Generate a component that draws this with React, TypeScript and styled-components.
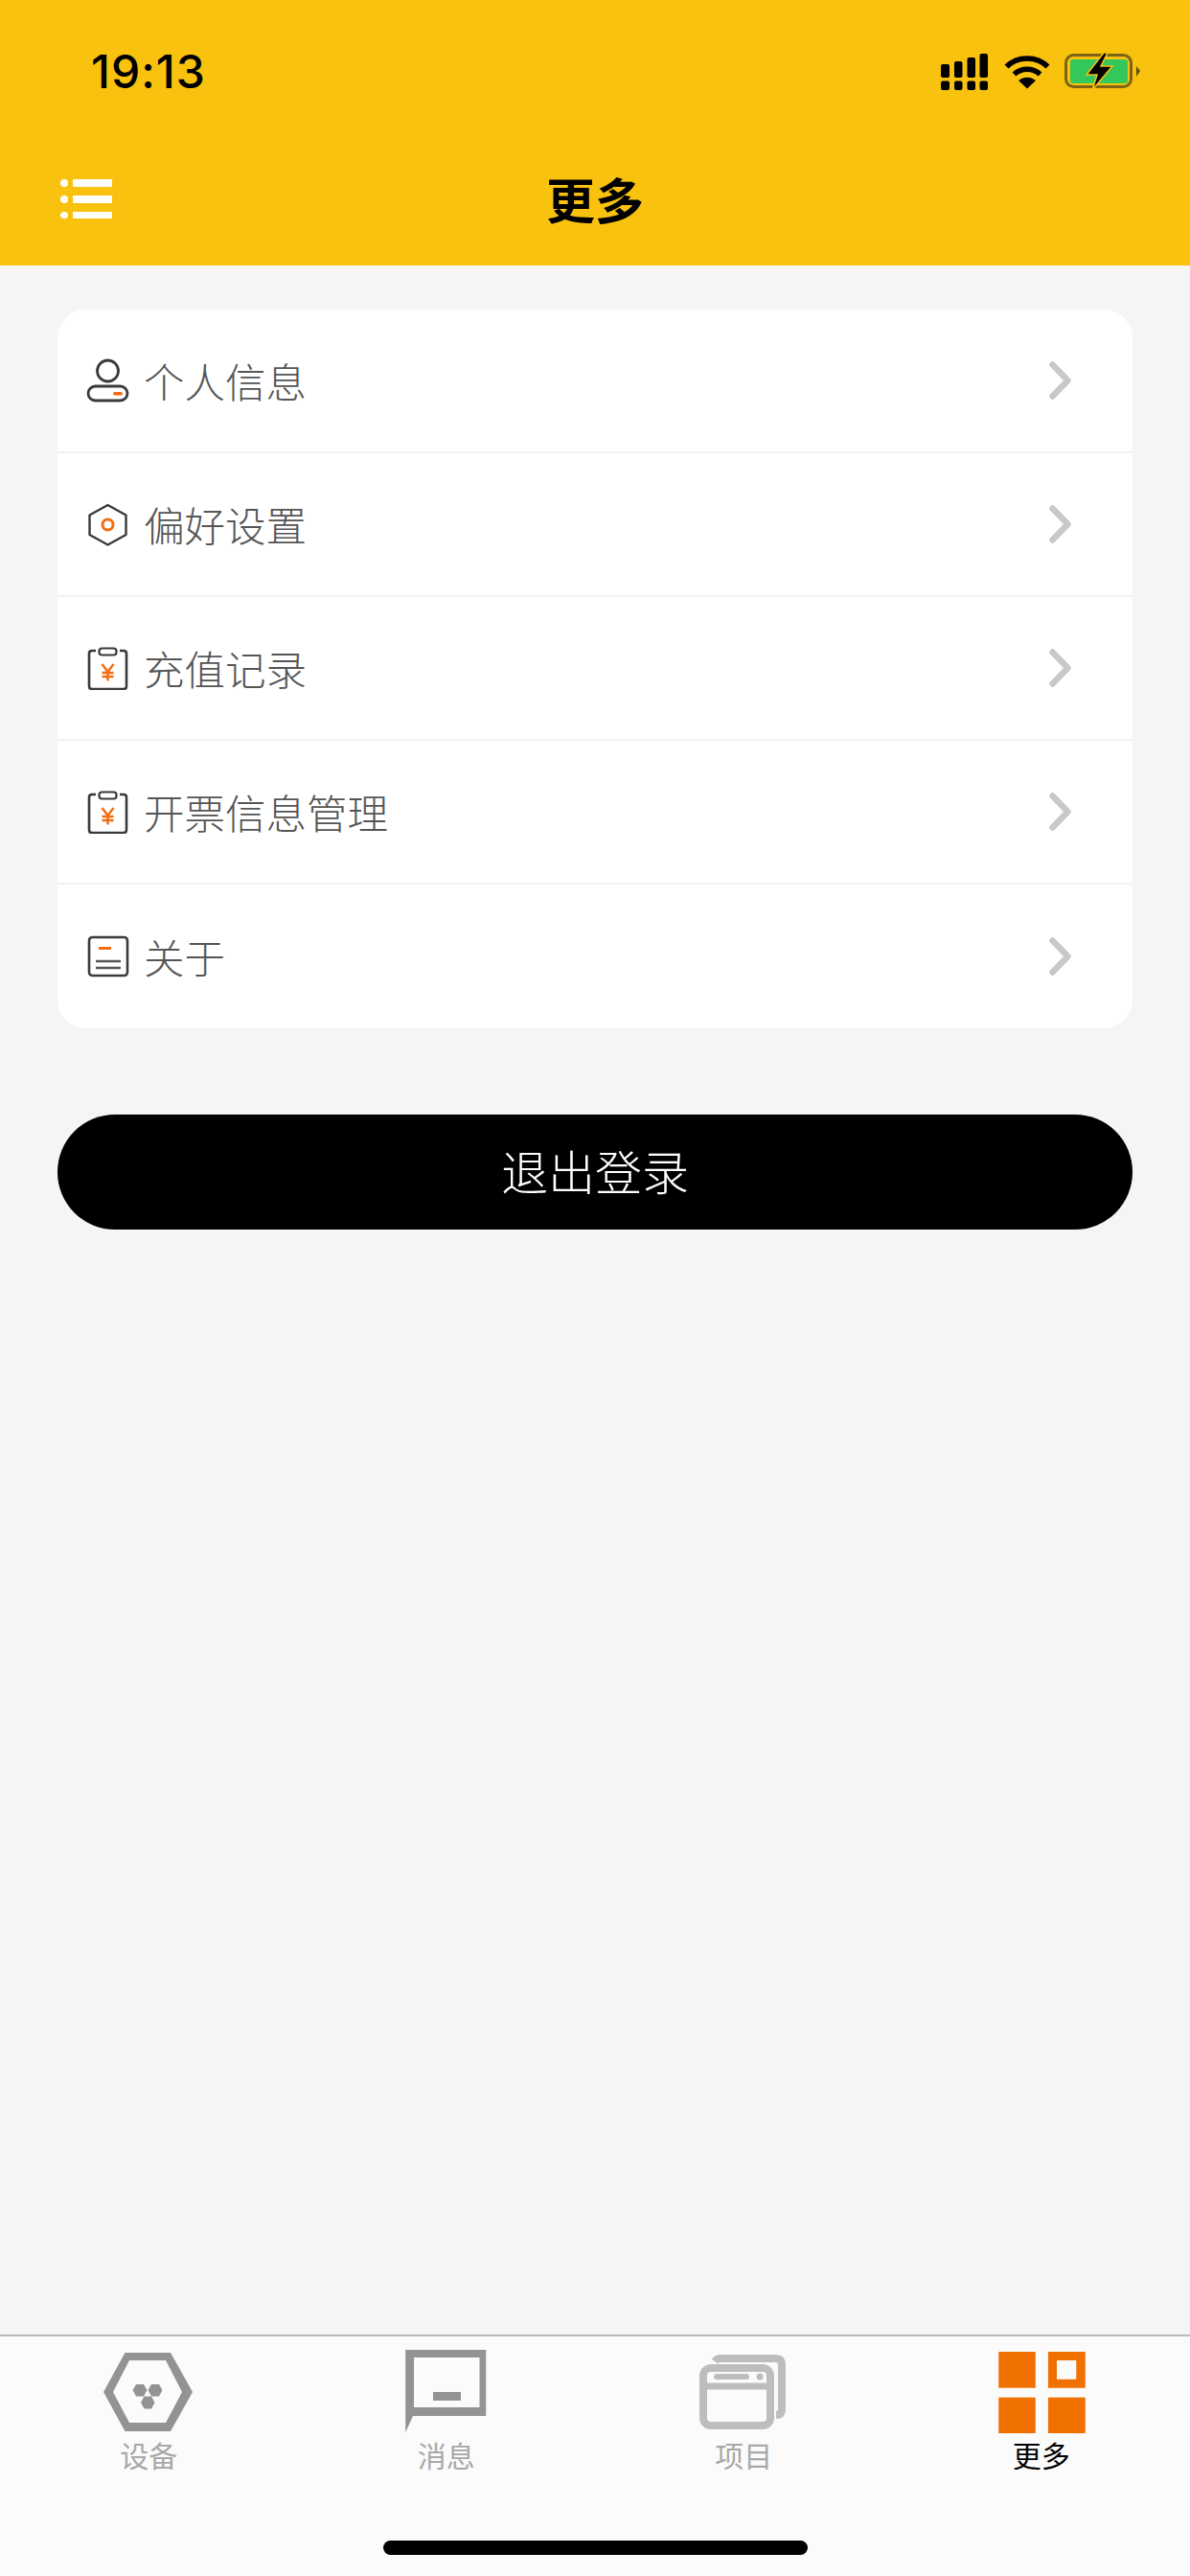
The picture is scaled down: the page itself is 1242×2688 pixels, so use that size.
import React from "react";
import styled, { createGlobalStyle } from "styled-components";

const Global = createGlobalStyle`
  html, body { margin: 0; padding: 0; background: #f5f5f5; }
  * { box-sizing: border-box; }
  body { font-family: "Noto Sans CJK SC", "Noto Sans", sans-serif; }
`;

const Screen = styled.div`
  width: 1242px;
  height: 2688px;
  display: flex;
  flex-direction: column;
  background: #f5f5f5;
  overflow: hidden;
`;

const Header = styled.header`
  height: 277px;
  flex: none;
  background: #f8c20f;
  display: flex;
  flex-direction: column;
`;

const StatusBar = styled.div`
  height: 132px;
  padding: 55px 51px 0 95px;
  display: flex;
  justify-content: space-between;
  align-items: flex-start;
`;

const Time = styled.div`
  font-family: Inter, "Liberation Sans", sans-serif;
  font-size: 48px;
  font-weight: 500;
  line-height: 40px;
  letter-spacing: 1px;
  color: #000;
`;

const StatusIcons = styled.div`
  display: flex;
  align-items: flex-start;
`;

const SignalIcon = styled.svg`
  width: 49px;
  height: 38px;
  margin-top: 1px;
  display: block;
`;

const WifiIcon = styled.svg`
  width: 48px;
  height: 36px;
  margin: 2px 15px 0 17px;
  display: block;
`;

const BatteryIcon = styled.svg`
  width: 80px;
  height: 40px;
  display: block;
`;

const NavBar = styled.nav`
  flex: 1;
  position: relative;
  display: flex;
  align-items: center;
  justify-content: center;
  padding-top: 4px;
`;

const MenuButton = styled.svg`
  position: absolute;
  left: 63px;
  top: 55px;
  width: 54px;
  height: 41px;
`;

const Title = styled.h1`
  margin: 0;
  font-size: 51px;
  font-weight: 700;
  line-height: 60px;
  color: #000;
`;

const Main = styled.main`
  flex: 1;
  padding: 46px 60px 0;
  display: flex;
  flex-direction: column;
  gap: 90px;
`;

const Card = styled.section`
  background: #fff;
  border-radius: 30px;
  overflow: hidden;
`;

const Row = styled.div`
  height: 150px;
  display: flex;
  align-items: center;
  padding: 0 64px 0 30px;
  border-bottom: 2px solid #f2f2f2;
  &:last-child {
    border-bottom: none;
  }
`;

const RowIcon = styled.svg`
  width: 46px;
  height: 46px;
  flex: none;
  display: block;
`;

const RowLabel = styled.span`
  flex: 1;
  margin-left: 14px;
  font-size: 42.5px;
  font-weight: 300;
  line-height: 56px;
  color: #555;
`;

const Chevron = styled.svg`
  width: 23px;
  height: 40px;
  flex: none;
  display: block;
`;

const LogoutButton = styled.button`
  height: 120px;
  border: none;
  border-radius: 60px;
  background: #000;
  color: #fff;
  font-family: inherit;
  font-size: 49px;
  font-weight: 300;
  padding: 0 0 6px;
`;

const TabBar = styled.footer`
  height: 252px;
  flex: none;
  background: #fbfbfb;
  border-top: 2px solid #b9b9b9;
  padding-top: 14px;
  display: flex;
  flex-direction: column;
`;

const Tabs = styled.div`
  display: grid;
  grid-template-columns: repeat(4, 1fr);
`;

const Tab = styled.div`
  display: flex;
  flex-direction: column;
  align-items: center;
`;

const TabIcon = styled.svg`
  width: 100px;
  height: 88px;
  display: block;
`;

const TabLabel = styled.span<{ $active?: boolean }>`
  margin-top: 1px;
  font-size: 30px;
  line-height: 40px;
  font-weight: 400;
  color: ${(p) => (p.$active ? "#000" : "#a8a8a8")};
`;

const HomeIndicator = styled.div`
  width: 443px;
  height: 15px;
  margin: 70px auto 0;
  border-radius: 8px;
  background: #000;
`;

const ink = "#3a3a3a";
const orange = "#f46c10";

const PersonGlyph = () => (
  <RowIcon viewBox="0 0 46 46" fill="none">
    <circle cx="22.5" cy="13" r="11" stroke={ink} strokeWidth="2.8" />
    <rect x="2" y="29" width="41" height="15" rx="7.5" stroke={ink} strokeWidth="2.8" />
    <rect x="28" y="35" width="10" height="3.4" rx="1.7" fill={orange} />
  </RowIcon>
);

const HexGlyph = () => (
  <RowIcon viewBox="0 0 46 46" fill="none">
    <path d="M22.5 3 41.5 13.5V34L22.5 44.5 3.5 34V13.5Z" stroke={ink} strokeWidth="2.4" strokeLinejoin="round" />
    <circle cx="22.5" cy="23.5" r="5.5" stroke={orange} strokeWidth="3" />
  </RowIcon>
);

const ClipboardGlyph = () => (
  <RowIcon viewBox="0 0 46 46" fill="none">
    <path d="M10 5H6Q3 5 3 8V42Q3 45 6 45H39Q42 45 42 42V8Q42 5 39 5H35" stroke={ink} strokeWidth="2.6" />
    <rect x="13.5" y="2.5" width="18" height="7" rx="3" stroke={ink} strokeWidth="2.2" />
    <path d="M16.5 19 22.500 27 28.500 19M22.500 27V36.500M16.500 28H28.500M16.500 32H28.500" stroke={orange} strokeWidth="2.4" />
  </RowIcon>
);

const DocGlyph = () => (
  <RowIcon viewBox="0 0 46 46" fill="none">
    <rect x="3" y="3" width="40" height="40" rx="3.5" stroke={ink} strokeWidth="2.6" />
    <rect x="13" y="13" width="13" height="3" fill={orange} />
    <path d="M10 28H36M10 35H36" stroke="#555" strokeWidth="2.4" />
  </RowIcon>
);

const rows = [
  { label: "个人信息", Icon: PersonGlyph },
  { label: "偏好设置", Icon: HexGlyph },
  { label: "充值记录", Icon: ClipboardGlyph },
  { label: "开票信息管理", Icon: ClipboardGlyph },
  { label: "关于", Icon: DocGlyph },
];

const gray = "#939393";

const DeviceTab = () => (
  <TabIcon viewBox="0 0 100 88">
    <path
      fillRule="evenodd"
      fill={gray}
      d="M25.500 3H73L96 44 73 85H25.500L3 44ZM30 11 13 44 30 76H68L85 44 68 11Z"
    />
    <path fill={gray} d="M37 36H45L48.500 42 45 48.500H37L33.500 42Z" />
    <path fill={gray} d="M53 36H61L64.500 42 61 48.500H53L49.500 42Z" />
    <path fill={gray} d="M45.500 48.500H53L56.500 55 53 61.500H45.500L42 55Z" />
  </TabIcon>
);

const MessageTab = () => (
  <TabIcon viewBox="0 0 100 88">
    <path
      fillRule="evenodd"
      fill={gray}
      d="M7.250 0H91.250V69H15L7.250 86ZM16 8V60H84.500V8Z"
    />
    <rect x="36" y="44" width="29" height="9" fill={gray} />
  </TabIcon>
);

const ProjectTab = () => (
  <TabIcon viewBox="0 0 100 88" fill="none">
    <path d="M20 12Q22 9 26 9H83Q90 9 90 16V62Q90 68 84 68" stroke="#bdbdbd" strokeWidth="8" />
    <rect x="8" y="19" width="70" height="60" rx="8" stroke="#bdbdbd" strokeWidth="8" />
    <path d="M8 38H78" stroke="#bdbdbd" strokeWidth="7" />
    <path d="M22 28H53" stroke="#bdbdbd" strokeWidth="6" strokeLinecap="round" />
    <circle cx="67" cy="28" r="3.500" fill="#bdbdbd" />
  </TabIcon>
);

const MoreTab = () => (
  <TabIcon viewBox="0 0 100 88">
    <rect x="5.250" y="2" width="38.500" height="37.700" fill="#f07000" />
    <path
      fillRule="evenodd"
      fill="#f07000"
      d="M56.900 2H95.750V39.700H56.900ZM66 11V30.700H86.300V11Z"
    />
    <rect x="5.250" y="49.700" width="38.500" height="37.300" fill="#f07000" />
    <rect x="56.900" y="49.700" width="38.850" height="37.300" fill="#f07000" />
  </TabIcon>
);

export default function App() {
  return (
    <>
      <Global />
      <Screen>
        <Header>
          <StatusBar>
            <Time>19:13</Time>
            <StatusIcons>
              <SignalIcon viewBox="0 0 49 38" fill="#000">
                <rect x="0" y="11" width="9" height="14" rx="2" />
                <rect x="14" y="8" width="8.500" height="17" rx="2" />
                <rect x="27.500" y="4" width="8.500" height="21" rx="2" />
                <rect x="40.500" y="0" width="8.500" height="25" rx="2" />
                <rect x="0" y="28.500" width="9" height="9.500" rx="2" />
                <rect x="14" y="28.500" width="8.500" height="9.500" rx="2" />
                <rect x="27.500" y="28.500" width="8.500" height="9.500" rx="2" />
                <rect x="40.500" y="28.500" width="8.500" height="9.500" rx="2" />
              </SignalIcon>
              <WifiIcon viewBox="0 0 48 36" fill="none">
                <path d="M2.500 12.500C14 1 34 1 45.500 12.500" stroke="#000" strokeWidth="5.500" />
                <path d="M10.500 20.500C18 13.500 30 13.500 37.500 20.500" stroke="#000" strokeWidth="5.500" />
                <path d="M15 27 24 35.500 33 27C28 22.500 20 22.500 15 27Z" fill="#000" />
              </WifiIcon>
              <BatteryIcon viewBox="0 0 80 40" fill="none">
                <rect x="1.500" y="2.500" width="68" height="33" rx="8" stroke="#7d6415" strokeWidth="3" />
                <rect x="6" y="7" width="60" height="25" rx="3" fill="#34c759" />
                <path d="M75 14 79 19 75 25Z" fill="#5c4a10" />
                <path
                  d="M41 0 23 23H34L29 39 50 14H38L45 0Z"
                  fill="#000"
                  stroke="#f8c20f"
                  strokeWidth="1.500"
                />
              </BatteryIcon>
            </StatusIcons>
          </StatusBar>
          <NavBar>
            <MenuButton viewBox="0 0 54 41" fill="#fff">
              <ellipse cx="4" cy="4" rx="4" ry="4" />
              <rect x="13" y="0" width="41" height="8" rx="1" />
              <ellipse cx="4" cy="21" rx="4" ry="4" />
              <rect x="13" y="17" width="41" height="8" rx="1" />
              <ellipse cx="4" cy="37.500" rx="4" ry="3.500" />
              <rect x="13" y="34" width="41" height="7" rx="1" />
            </MenuButton>
            <Title>更多</Title>
          </NavBar>
        </Header>
        <Main>
          <Card>
            {rows.map(({ label, Icon }) => (
              <Row key={label}>
                <Icon />
                <RowLabel>{label}</RowLabel>
                <Chevron viewBox="0 0 23 40" fill="none">
                  <path
                    d="M3.500 3.500 19.500 20 3.500 36.500"
                    stroke="#c8c8c8"
                    strokeWidth="6.500"
                    strokeLinecap="round"
                    strokeLinejoin="round"
                  />
                </Chevron>
              </Row>
            ))}
          </Card>
          <LogoutButton>退出登录</LogoutButton>
        </Main>
        <TabBar>
          <Tabs>
            <Tab>
              <DeviceTab />
              <TabLabel>设备</TabLabel>
            </Tab>
            <Tab>
              <MessageTab />
              <TabLabel>消息</TabLabel>
            </Tab>
            <Tab>
              <ProjectTab />
              <TabLabel>项目</TabLabel>
            </Tab>
            <Tab>
              <MoreTab />
              <TabLabel $active>更多</TabLabel>
            </Tab>
          </Tabs>
          <HomeIndicator />
        </TabBar>
      </Screen>
    </>
  );
}
